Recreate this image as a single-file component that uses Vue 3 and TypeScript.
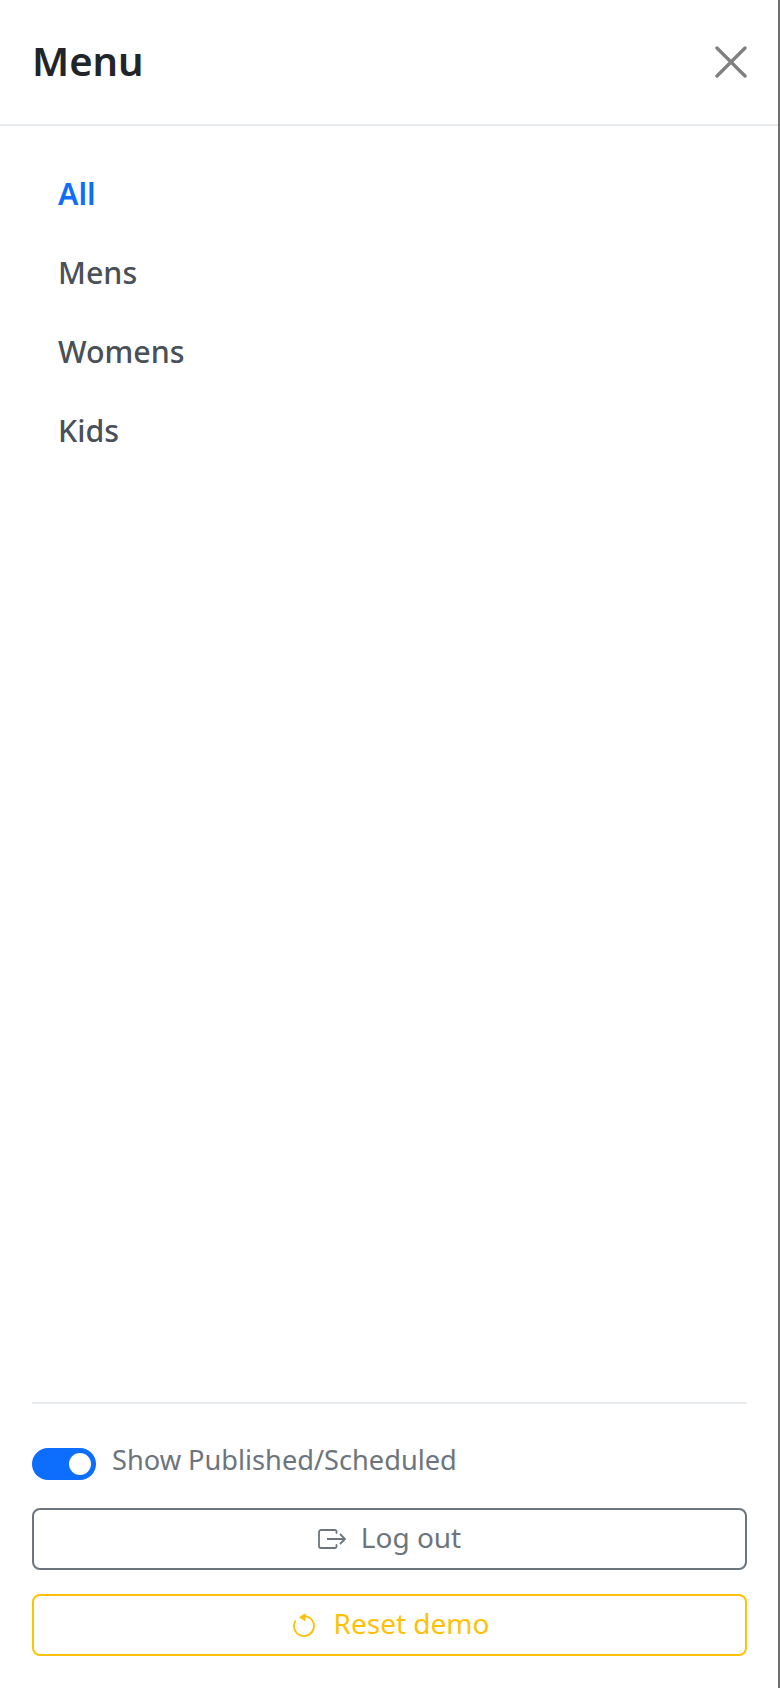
<script setup lang="ts">
const items: string[] = ['All', 'Mens', 'Womens', 'Kids']
</script>

<template>
  <div class="page">
    <aside class="panel">
      <header class="head">
        <h1 class="title">Menu</h1>
        <svg class="close" viewBox="0 0 32 32" width="32" height="32" aria-label="Close">
          <path d="M2 2 30 30M30 2 2 30" fill="none" stroke="#808080" stroke-width="3.4" stroke-linecap="round" />
        </svg>
      </header>
      <nav class="nav">
        <a v-for="(item, i) in items" :key="item" class="link" :class="{ active: i === 0 }">{{ item }}</a>
      </nav>
      <footer class="foot">
        <div class="rule"></div>
        <label class="switch">
          <span class="track"><span class="knob"></span></span>
          <span class="switch-label">Show Published/Scheduled</span>
        </label>
        <button class="btn grey" type="button">
          <svg viewBox="0 0 28 20" width="28" height="20" fill="none" stroke="currentColor" stroke-width="1.800">
            <path d="M18.500 4V2.500A1.500 1.500 0 0 0 17 1H3a2 2 0 0 0-2 2v14a2 2 0 0 0 2 2h14a1.500 1.500 0 0 0 1.500-1.500V16" stroke-linecap="round" />
            <path d="M9 10H27M22 5 27 10 22 15" />
          </svg>
          <span class="btn-text">Log out</span>
        </button>
        <button class="btn yellow" type="button">
          <svg viewBox="0 0 22 24" width="22" height="24" fill="none" stroke="currentColor" stroke-width="1.800">
            <path d="M12 3.050A10 10 0 1 1 2.200 8.200" stroke-linecap="round" />
            <path d="M12.500 0V8.500L6 4.200Z" fill="currentColor" stroke="none" />
          </svg>
          <span class="btn-text">Reset demo</span>
        </button>
      </footer>
    </aside>
  </div>
</template>

<style>
html, body { margin: 0; background: #fff; }
</style>

<style scoped>
.page {
  height: 1688px;
  display: flex;
  font-family: "Noto Sans", sans-serif;
}
.panel {
  flex: 1;
  display: flex;
  flex-direction: column;
  box-sizing: border-box;
  border-right: 2px solid #6f6f6f;
  background: #fff;
}
.head {
  height: 124px;
  flex: none;
  display: flex;
  align-items: center;
  justify-content: space-between;
  padding: 0 31px 0 32px;
  border-bottom: 2px solid #e9ecef;
}
.title {
  margin: 0 0 3px;
  font-size: 40px;
  font-weight: 600;
  color: #212529;
}
.nav {
  flex: 1;
  display: flex;
  flex-direction: column;
  padding-top: 27.500px;
}
.link {
  height: 79px;
  display: flex;
  align-items: center;
  padding-left: 58px;
  font-size: 30.4px;
  font-weight: 500;
  color: #495057;
}
.active {
  color: #0d6efd;
  font-weight: 600;
}
.foot {
  display: flex;
  flex-direction: column;
  padding: 0 31px 32px 32px;
}
.rule {
  height: 2px;
  background: #e9ecef;
  margin-bottom: 44px;
}
.switch {
  display: flex;
  align-items: center;
  gap: 16px;
  color: #6c757d;
  height: 32px;
  margin-bottom: 28px;
}
.switch-label {
  font-size: 27.2px;
  margin-top: -10px;
}
.track {
  width: 64px;
  height: 32px;
  border-radius: 16px;
  background: #0d6efd;
  display: flex;
  align-items: center;
  justify-content: flex-end;
  padding-right: 5px;
  box-sizing: border-box;
}
.knob {
  width: 22px;
  height: 22px;
  border-radius: 50%;
  background: #fff;
}
.btn {
  height: 62px;
  display: flex;
  align-items: center;
  justify-content: center;
  gap: 15px;
  background: #fff;
  border: 2px solid;
  border-radius: 8px;
  font-family: inherit;
  font-size: 28px;
}
.btn-text {
  margin-top: -4px;
}
.grey {
  color: #6c757d;
  margin-bottom: 24px;
}
.yellow {
  color: #ffc107;
  gap: 19px;
  padding-left: 9px;
}
</style>
